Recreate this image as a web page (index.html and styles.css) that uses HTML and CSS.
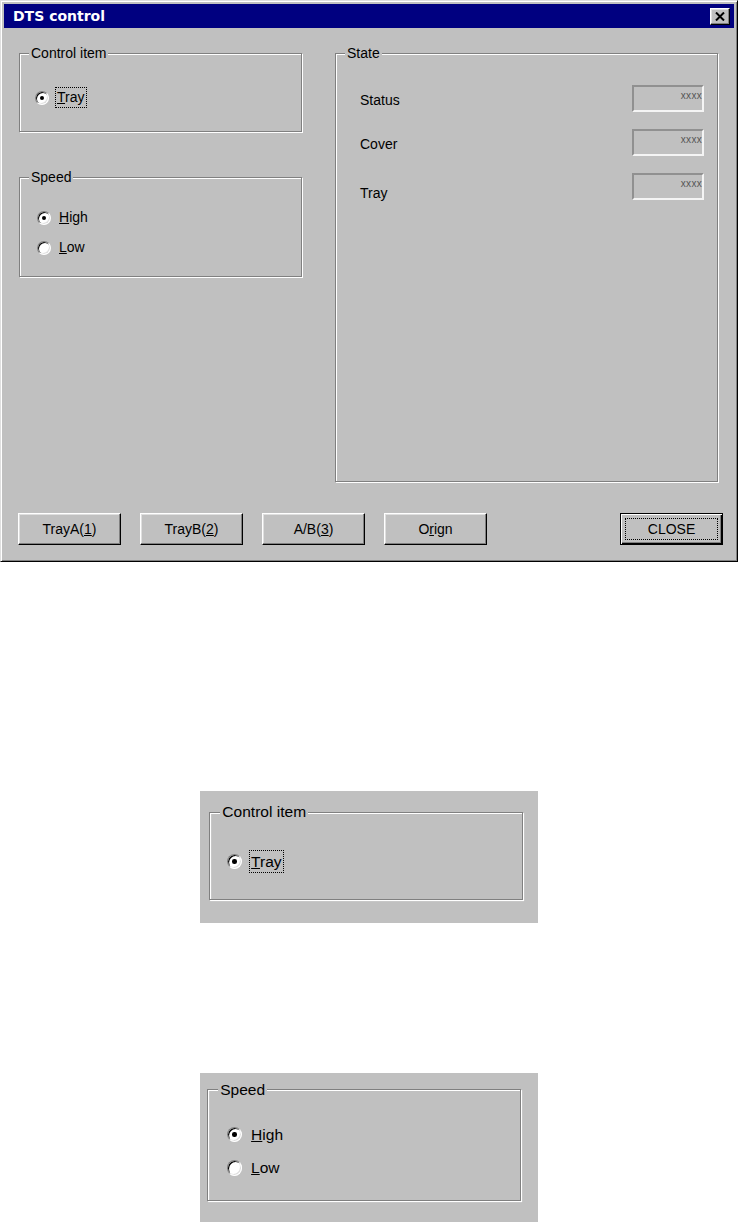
FILE: index.html
```html
<!DOCTYPE html>
<html lang="en">
<head>
  <meta charset="UTF-8" />
  <meta name="viewport" content="width=device-width, initial-scale=1" />
  <title>DTS control</title>
  <link rel="stylesheet" href="styles.css">
</head>
<body>

  <div class="window">
    <div class="titlebar">
      <span class="title">DTS control</span>
      <button class="close-btn" aria-label="Close">
        <svg width="10" height="9" viewBox="0 0 10 9">
          <path d="M1 0.5 L9 8.5 M9 0.5 L1 8.5" stroke="#000" stroke-width="2" fill="none" />
        </svg>
      </button>
    </div>

    <div class="dialog-body">
      <div class="left-col">
        <fieldset class="group group-control">
          <legend>Control item</legend>
          <label class="radio-row">
            <span class="radio checked"></span>
            <span class="focus"><u>T</u>ray</span>
          </label>
        </fieldset>

        <fieldset class="group group-speed">
          <legend>Speed</legend>
          <label class="radio-row">
            <span class="radio checked"></span>
            <span class="caption"><u>H</u>igh</span>
          </label>
          <label class="radio-row">
            <span class="radio"></span>
            <span class="caption"><u>L</u>ow</span>
          </label>
        </fieldset>
      </div>

      <fieldset class="group group-state">
        <legend>State</legend>
        <div class="state-list">
          <div class="state-row">
            <span class="state-label">Status</span>
            <span class="state-box">xxxx</span>
          </div>
          <div class="state-row">
            <span class="state-label">Cover</span>
            <span class="state-box">xxxx</span>
          </div>
          <div class="state-row state-row-tray">
            <span class="state-label">Tray</span>
            <span class="state-box">xxxx</span>
          </div>
        </div>
      </fieldset>
    </div>

    <div class="button-row">
      <button class="btn">TrayA(<u>1</u>)</button>
      <button class="btn">TrayB(<u>2</u>)</button>
      <button class="btn">A/B(<u>3</u>)</button>
      <button class="btn">O<u>r</u>ign</button>
      <button class="btn btn-default"><span class="focus-box">CLOSE</span></button>
    </div>
  </div>

  <div class="figures">
    <div class="snippet snippet-control">
      <fieldset class="group group-control">
        <legend>Control item</legend>
        <label class="radio-row">
          <span class="radio checked"></span>
          <span class="focus"><u>T</u>ray</span>
        </label>
      </fieldset>
    </div>

    <div class="snippet snippet-speed">
      <fieldset class="group group-speed">
        <legend>Speed</legend>
        <label class="radio-row">
          <span class="radio checked"></span>
          <span class="caption"><u>H</u>igh</span>
        </label>
        <label class="radio-row">
          <span class="radio"></span>
          <span class="caption"><u>L</u>ow</span>
        </label>
      </fieldset>
    </div>
  </div>

</body>
</html>
```

FILE: styles.css
```css
body {
  margin: 0;
  padding: 0;
  background: #fff;
  font-family: "Liberation Sans", Arial, sans-serif;
  font-size: 14px;
  color: #000;
}
.window {
  width: 738px;
  height: 562px;
  box-sizing: border-box;
  background: #c0c0c0;
  border: 1px solid;
  border-color: #dfdfdf #000 #000 #dfdfdf;
  box-shadow: inset 1px 1px 0 #fff, inset -1px -1px 0 #808080;
  padding: 3px;
  display: flex;
  flex-direction: column;
}
.titlebar {
  height: 24px;
  background: #000080;
  display: flex;
  align-items: center;
  justify-content: space-between;
  padding: 0 4px 0 9px;
}
.title {
  font-family: "DejaVu Sans", sans-serif;
  font-weight: bold;
  font-size: 14px;
  color: #fff;
}
.close-btn {
  width: 20px;
  height: 17px;
  padding: 0;
  background: #c0c0c0;
  border: 1px solid;
  border-color: #fff #000 #000 #fff;
  box-shadow: inset -1px -1px 0 #808080, inset 1px 1px 0 #dfdfdf;
  display: flex;
  align-items: center;
  justify-content: center;
}
.close-btn svg {
  display: block;
}
.dialog-body {
  display: flex;
  gap: 33px;
  padding: 17px 0 0 15px;
}
.left-col {
  width: 283px;
  display: flex;
  flex-direction: column;
  gap: 37px;
}
.group {
  margin: 0;
  padding: 0;
  min-width: 0;
  box-sizing: border-box;
  border: 1px solid #808080;
  box-shadow: inset 1px 1px 0 #fff, 1px 1px 0 #fff;
}
.group legend {
  margin-left: 9px;
  padding: 0 2px;
  line-height: 16px;
  background: #c0c0c0;
}
.group-control {
  width: 283px;
  height: 87px;
  padding-top: 26px;
}
.group-control .radio-row {
  margin-left: 15px;
}
.group-speed {
  width: 283px;
  height: 108px;
  padding-top: 22px;
}
.group-speed .radio-row {
  margin-left: 17px;
}
.group-state {
  width: 383px;
  height: 437px;
  padding-top: 24px;
}
.radio-row {
  display: flex;
  align-items: center;
  height: 21px;
}
.group-speed .radio-row + .radio-row {
  margin-top: 9px;
}
.radio {
  position: relative;
  flex: none;
  width: 14px;
  height: 14px;
  box-sizing: border-box;
  border-radius: 50%;
  background: #fff;
  border: 1px solid;
  border-color: #808080 #fff #fff #808080;
  box-shadow: inset 1px 1px 0 #000, inset -1px -1px 0 #dfdfdf;
  margin-right: 6px;
}
.radio.checked::after {
  content: '';
  position: absolute;
  left: 50%;
  top: 50%;
  width: 4px;
  height: 4px;
  margin: -2px 0 0 -2px;
  border-radius: 50%;
  background: #000;
}
.focus, .caption {
  line-height: 19px;
  padding: 0 1px;
  border: 1px dotted transparent;
}
.focus {
  border-color: #000;
}
.state-list {
  display: flex;
  flex-direction: column;
  gap: 17px;
  padding: 0 13px 0 24px;
}
.state-row {
  display: flex;
  justify-content: space-between;
  align-items: flex-start;
}
.state-label {
  line-height: 16px;
  padding-top: 7px;
}
.state-row-tray .state-label {
  padding-top: 12px;
}
.state-box {
  width: 72px;
  height: 27px;
  box-sizing: border-box;
  border: 2px solid;
  border-color: #909090 #f4f4f4 #f4f4f4 #909090;
  text-align: right;
  font-size: 10px;
  line-height: 10px;
  letter-spacing: 0.3px;
  color: #555;
  padding-top: 4px;
}
.button-row {
  display: flex;
  gap: 19px;
  margin-top: 31px;
  padding: 0 11px 0 14px;
}
.btn {
  width: 103px;
  height: 32px;
  padding: 0;
  font-family: "Liberation Sans", Arial, sans-serif;
  font-size: 14px;
  color: #000;
  background: #c0c0c0;
  border: 1px solid;
  border-color: #fff #000 #000 #fff;
  box-shadow: inset -1px -1px 0 #808080, inset 1px 1px 0 #dfdfdf;
}
.btn-default {
  margin-left: auto;
  border-color: #000;
  box-shadow: inset 1px 1px 0 #fff, inset -1px -1px 0 #000, inset -2px -2px 0 #808080;
  display: flex;
  padding: 4px;
}
.focus-box {
  flex: 1;
  display: flex;
  align-items: center;
  justify-content: center;
  border: 1px dotted #000;
}
.figures {
  display: flex;
  flex-direction: column;
  align-items: center;
  gap: 150px;
  padding-top: 229px;
}
.snippet {
  zoom: 1.11;
  width: 304px;
  box-sizing: border-box;
  background: #c0c0c0;
}
.snippet-control {
  height: 119px;
  padding: 11px 0 0 8px;
}
.snippet-speed {
  height: 134px;
  padding: 7px 0 0 6px;
}
```
